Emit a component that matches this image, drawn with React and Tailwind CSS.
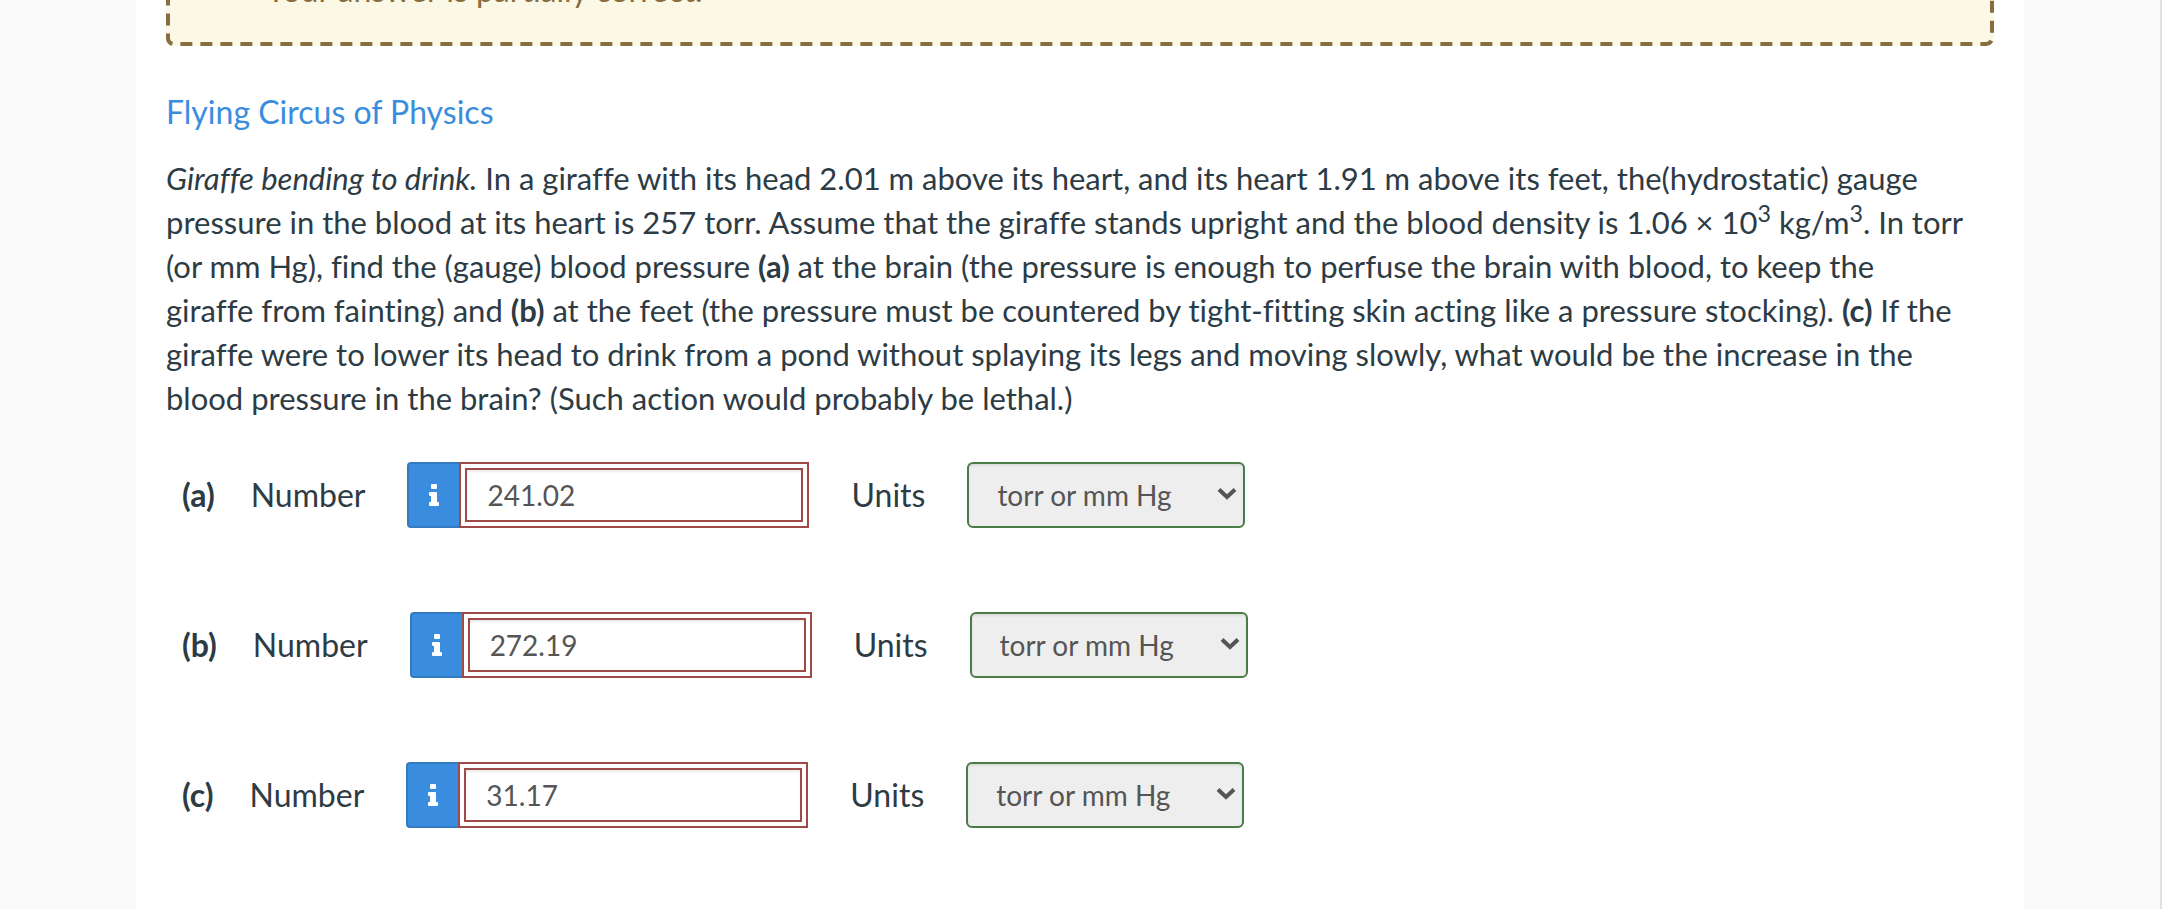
const FONT = 'font-[Lato,"Open_Sans",sans-serif] [font-variant-ligatures:none]';

const answers = [
  { part: 'a', value: '241.02' },
  { part: 'b', value: '272.19' },
  { part: 'c', value: '31.17' },
];

function InfoIcon() {
  return (
    <svg className="h-[22px] w-[10px]" viewBox="0 0 10 22" fill="currentColor" aria-hidden="true">
      <rect x="2" y="0" width="6" height="5" rx="1" />
      <path d="M1 8h6a1 1 0 0 1 1 1v9h1a1 1 0 0 1 1 1v2a1 1 0 0 1-1 1H1a1 1 0 0 1-1-1v-2a1 1 0 0 1 1-1h1v-6H1a1 1 0 0 1-1-1V9a1 1 0 0 1 1-1z" />
    </svg>
  );
}

function Alert() {
  return (
    <div className="relative -mt-16 rounded-lg bg-[#fbf8e5] pt-8 pr-8 pb-[34px] pl-[100px] text-[#876d3f]">
      <svg className="absolute inset-0 h-full w-full" aria-hidden="true">
        <rect
          className="h-[calc(100%-4px)] w-[calc(100%-4px)]"
          x="2"
          y="2"
          rx="6"
          fill="none"
          stroke="currentColor"
          strokeWidth="4"
          strokeDasharray="12 8"
          strokeDashoffset="2"
        />
      </svg>
      <p>Your answer is partially correct.</p>
    </div>
  );
}

function AnswerRow({ part, value }) {
  return (
    <div className="flex h-[66px] items-center pl-4">
      <span className="mr-9 font-bold">({part})</span>
      <label htmlFor={`number-${part}`} className="mr-[42px]">Number</label>
      <div className="flex h-full">
        <button
          type="button"
          aria-label="Number format help"
          className="flex w-[52px] items-center justify-center rounded-l-sm border-2 border-r-0 border-[#337ac0] bg-[#3a8dde] text-white"
        >
          <InfoIcon />
        </button>
        <div className="border-2 border-[#a04a48] p-1">
          <input
            id={`number-${part}`}
            type="text"
            defaultValue={value}
            className="h-full w-[338px] border-2 border-[#a04a48] bg-white px-5 text-[28px] text-[#555] inset-shadow-[0_2px_2px_rgba(0,0,0,0.08)]"
          />
        </div>
      </div>
      <label htmlFor={`units-${part}`} className="mx-[42px]">Units</label>
      <div className="relative h-full">
        <select
          id={`units-${part}`}
          className="h-full w-[278px] appearance-none rounded-md border-2 border-[#4a7c47] bg-[#eee] pl-7 text-[28px] text-[#555] inset-shadow-[0_2px_2px_rgba(0,0,0,0.08)]"
        >
          <option>torr or mm Hg</option>
        </select>
        <svg
          className="pointer-events-none absolute top-[26px] right-2 h-3 w-5 text-[#555]"
          viewBox="0 0 20 12"
          fill="none"
          stroke="currentColor"
          strokeWidth="4"
          aria-hidden="true"
        >
          <path d="M2 1.5l8 7.5 8-7.5" />
        </svg>
      </div>
    </div>
  );
}

export default function App() {
  return (
    <div className={`${FONT} min-h-screen border-r-2 border-[#e1e1e1] bg-[#fafafa] px-[136px] text-[32px] leading-[44px] text-[#2d3b45]`}>
      <main className="flow-root min-h-screen overflow-hidden bg-white px-[30px]">
        <Alert />
        <h1 className="mt-11">
          <a href="#" className="text-[#3a8dde]">Flying Circus of Physics</a>
        </h1>
        <p className="mt-[22px] pr-7 text-[31px]">
          <em>Giraffe bending to drink.</em> In a giraffe with its head 2.01 m above its heart, and its heart 1.91 m
          above its feet, the(hydrostatic) gauge pressure in the blood at its heart is 257 torr. Assume that the
          giraffe stands upright and the blood density is 1.06 × 10<sup>3</sup> kg/m<sup>3</sup>. In torr (or mm Hg),
          find the (gauge) blood pressure <b>(a)</b> at the brain (the pressure is enough to perfuse the brain with
          blood, to keep the giraffe from fainting) and <b>(b)</b> at the feet (the pressure must be countered by
          tight-fitting skin acting like a pressure stocking). <b>(c)</b> If the giraffe were to lower its head to
          drink from a pond without splaying its legs and moving slowly, what would be the increase in the blood
          pressure in the brain? (Such action would probably be lethal.)
        </p>
        <form className="mt-[42px] flex flex-col gap-[84px]">
          {answers.map((answer) => (
            <AnswerRow key={answer.part} part={answer.part} value={answer.value} />
          ))}
        </form>
      </main>
    </div>
  );
}
